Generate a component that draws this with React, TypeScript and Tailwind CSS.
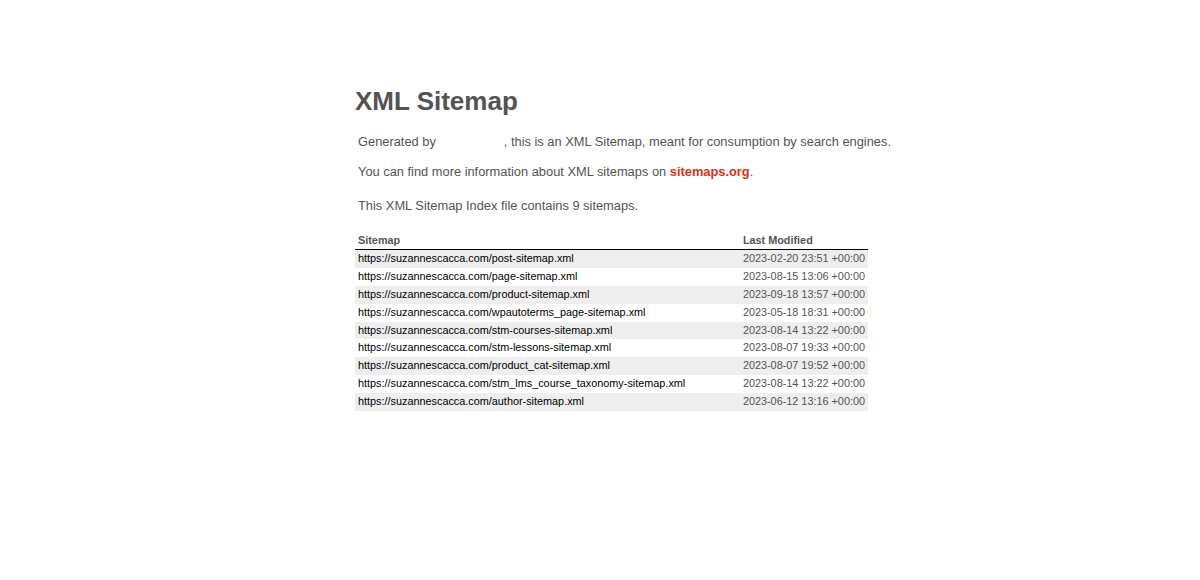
import React from "react"

// Sitemap index entries, as listed on the page
const sitemaps = [
    { loc: "https://suzannescacca.com/post-sitemap.xml", lastmod: "2023-02-20 23:51 +00:00" },
    { loc: "https://suzannescacca.com/page-sitemap.xml", lastmod: "2023-08-15 13:06 +00:00" },
    { loc: "https://suzannescacca.com/product-sitemap.xml", lastmod: "2023-09-18 13:57 +00:00" },
    { loc: "https://suzannescacca.com/wpautoterms_page-sitemap.xml", lastmod: "2023-05-18 18:31 +00:00" },
    { loc: "https://suzannescacca.com/stm-courses-sitemap.xml", lastmod: "2023-08-14 13:22 +00:00" },
    { loc: "https://suzannescacca.com/stm-lessons-sitemap.xml", lastmod: "2023-08-07 19:33 +00:00" },
    { loc: "https://suzannescacca.com/product_cat-sitemap.xml", lastmod: "2023-08-07 19:52 +00:00" },
    { loc: "https://suzannescacca.com/stm_lms_course_taxonomy-sitemap.xml", lastmod: "2023-08-14 13:22 +00:00" },
    { loc: "https://suzannescacca.com/author-sitemap.xml", lastmod: "2023-06-12 13:16 +00:00" },
]

const App: React.FC = () => {
    return (
        <div className="min-h-[580px] bg-white text-[12.85px] text-[#545353] font-['Liberation_Sans',Arial,Helvetica,sans-serif]">
            <div className="mx-auto w-[490px] pt-[86px]">
                <h1 className="text-[26px] leading-[30px] font-bold">XML Sitemap</h1>

                {/* Description */}
                <p className="mx-[3px] mt-[18px] leading-[15.6px] whitespace-nowrap">
                    Generated by<span className="inline-block w-[68px]"></span>, this is an XML Sitemap, meant for consumption by search engines.
                </p>
                <p className="mx-[3px] mt-[14.4px] leading-[15.6px] whitespace-nowrap">
                    You can find more information about XML sitemaps on{" "}
                    <a href="#" className="text-[#da3114] font-semibold">sitemaps.org</a>.
                </p>
                <p className="mx-[3px] mt-[18.4px] leading-[15.6px] whitespace-nowrap">
                    This XML Sitemap Index file contains 9 sitemaps.
                </p>

                {/* Sitemap table */}
                <table className="mt-[18px] w-[513px] border-collapse text-[10.85px]">
                    <thead>
                        <tr>
                            <th className="w-[387px] border-b border-black px-[3px] py-[2px] leading-[13.8px] text-left font-bold">Sitemap</th>
                            <th className="border-b border-black px-[3px] py-[2px] leading-[13.8px] text-left font-bold">Last Modified</th>
                        </tr>
                    </thead>
                    <tbody>
                        {sitemaps.map((s, i) => (
                            <tr key={s.loc} className={i % 2 === 0 ? "bg-[#eeeeee]" : "bg-white"}>
                                <td className="px-[3px] py-[2px] leading-[13.8px]">
                                    <a href="#" className="text-black">{s.loc}</a>
                                </td>
                                <td className="px-[3px] py-[2px] leading-[13.8px] whitespace-nowrap">{s.lastmod}</td>
                            </tr>
                        ))}
                    </tbody>
                </table>
            </div>
        </div>
    )
}

export default App
